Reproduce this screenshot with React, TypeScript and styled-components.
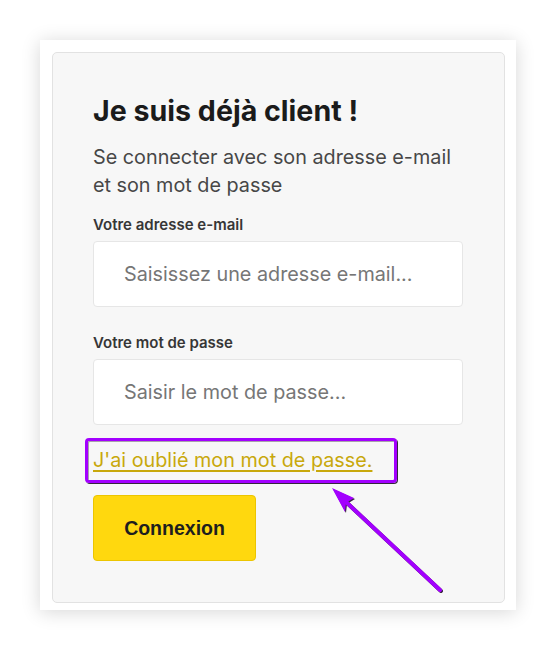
import React from "react";
import styled, { createGlobalStyle } from "styled-components";

const GlobalStyle = createGlobalStyle`
  html, body { margin: 0; padding: 0; background: #ffffff; }
  body { font-family: Inter, "Noto Sans", sans-serif; }
  * { box-sizing: border-box; }
`;

const Page = styled.div`
  padding: 40px;
  width: 556px;
`;

const Card = styled.div`
  position: relative;
  width: 476px;
  height: 570px;
  padding: 12px 11px 7px 12px;
  background: #ffffff;
  box-shadow: 0 2px 18px rgba(0, 0, 0, 0.16);
`;

const Panel = styled.div`
  display: flex;
  flex-direction: column;
  align-items: flex-start;
  height: 100%;
  padding: 40px 40px 41px;
  background: #f7f7f7;
  border: 1px solid #e2e2e2;
  border-radius: 5px;
`;

const Title = styled.h1`
  margin: 0;
  font-size: 28.6px;
  line-height: 36px;
  font-weight: 700;
  color: #1b1b1b;
`;

const Subtitle = styled.p`
  margin: 14px 0 0;
  font-size: 19.8px;
  line-height: 28px;
  font-weight: 400;
  color: #474747;
`;

const Field = styled.label<{ $top: number }>`
  display: flex;
  flex-direction: column;
  gap: 6px;
  width: 100%;
  margin-top: ${(p) => p.$top}px;
`;

const Label = styled.span`
  font-size: 15px;
  line-height: 20px;
  font-weight: 600;
  color: #363636;
`;

const Input = styled.input`
  width: 370px;
  height: 66px;
  padding: 0 30px;
  border: 1px solid #e6e6e6;
  border-radius: 4px;
  background: #ffffff;
  font-family: Inter, "Noto Sans", sans-serif;
  font-size: 19.8px;
  color: #333;
  outline: none;
  &::placeholder { color: #767676; }
`;

const ForgotLink = styled.a`
  margin-top: 22px;
  font-size: 19.8px;
  line-height: 26px;
  color: #c8a80c;
  text-decoration: underline;
  text-underline-offset: 3px;
  text-decoration-thickness: 1.5px;
  cursor: pointer;
`;

const SubmitButton = styled.button`
  margin-top: 22px;
  width: 163px;
  height: 66px;
  flex-shrink: 0;
  background: #ffd80e;
  border: 1px solid #ecc500;
  border-radius: 4px;
  font-family: "Liberation Sans", Arial, sans-serif;
  font-weight: 700;
  font-size: 19.5px;
  color: #1e1e1e;
  cursor: pointer;
`;

const Highlight = styled.div`
  position: absolute;
  left: 45px;
  top: 398px;
  width: 312px;
  height: 45px;
  border: 3px solid #a300ff;
  border-radius: 4px;
  box-shadow: 1px 1px 0.5px rgba(20, 0, 30, 0.85), inset 1px 1px 0.5px rgba(20, 0, 30, 0.35);
  pointer-events: none;
`;

const ArrowLayer = styled.svg`
  position: absolute;
  left: 0;
  top: 0;
  width: 476px;
  height: 570px;
  pointer-events: none;
  overflow: visible;
  filter: drop-shadow(1px 1px 0 rgba(20, 0, 30, 0.85));
`;

export default function App() {
  return (
    <>
      <GlobalStyle />
      <Page>
        <Card>
          <Panel>
            <Title>Je suis déjà client !</Title>
            <Subtitle>
              Se connecter avec son adresse e-mail
              <br />
              et son mot de passe
            </Subtitle>
            <Field $top={16}>
              <Label>Votre adresse e-mail</Label>
              <Input type="email" placeholder="Saisissez une adresse e-mail..." />
            </Field>
            <Field $top={26}>
              <Label>Votre mot de passe</Label>
              <Input type="password" placeholder="Saisir le mot de passe..." />
            </Field>
            <ForgotLink>J'ai oublié mon mot de passe.</ForgotLink>
            <SubmitButton>Connexion</SubmitButton>
          </Panel>
          <Highlight />
          <ArrowLayer viewBox="0 0 476 570">
            <line x1="400" y1="550" x2="305" y2="461" stroke="#a300ff" strokeWidth="4" strokeLinecap="round" />
            <polygon points="292,448 314,458 306,463 305,472" fill="#a300ff" />
          </ArrowLayer>
        </Card>
      </Page>
    </>
  );
}
